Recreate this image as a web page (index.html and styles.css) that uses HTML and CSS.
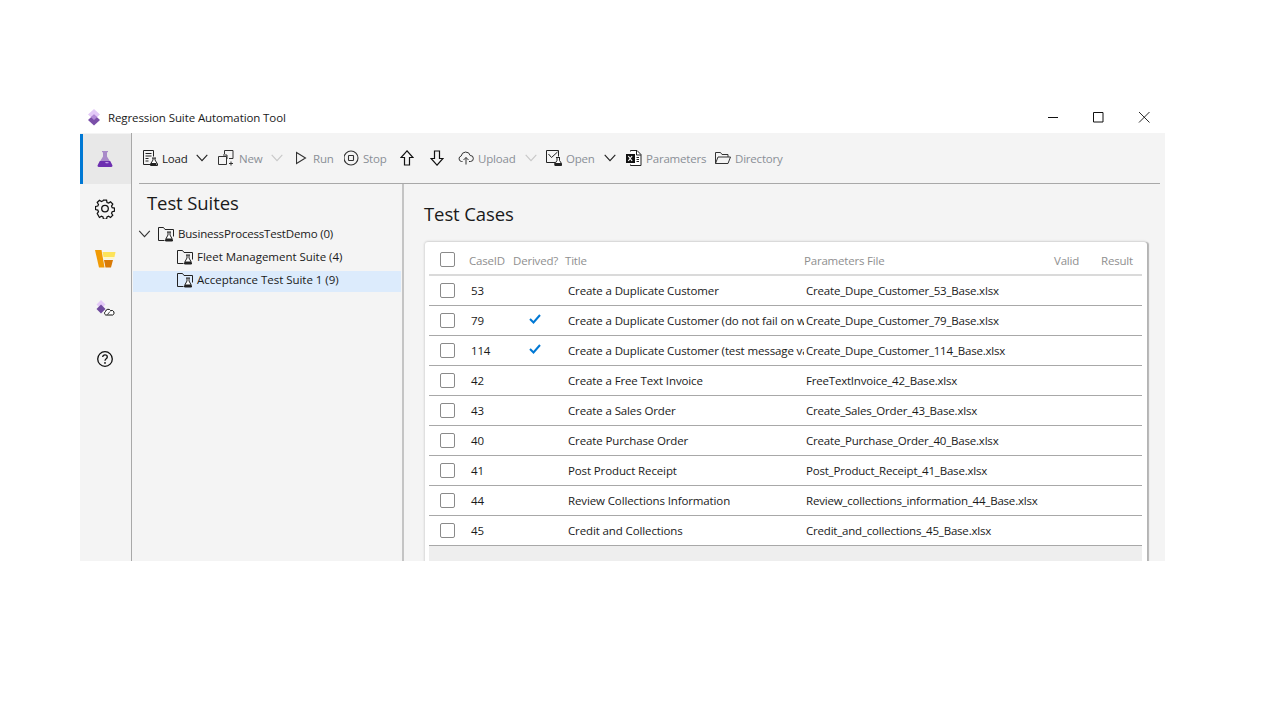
FILE: index.html
```html
<!DOCTYPE html>
<html lang="en">
<head>
<meta charset="utf-8">
<title>Regression Suite Automation Tool</title>
<link rel="stylesheet" href="styles.css">
</head>
<body>
<svg class="defs" width="0" height="0" aria-hidden="true">
  <defs>
    <symbol id="suite" viewBox="0 0 16 16">
      <path d="M.5 14.500V1.500h5l1.500 2h8.500v7" fill="none" stroke="#222"/>
      <path d="M.5 14.500h6" fill="none" stroke="#222"/>
      <path d="M9 6h4M10 6v3l-2.500 4.500v1.500h7v-1.500L12 9V6" fill="#fff" stroke="#222"/>
      <path d="M8 12.500h6V15H8z" fill="#222"/>
    </symbol>
    <symbol id="chev" viewBox="0 0 12 8">
      <path d="M.7.8 6 6.600 11.300.8" fill="none" stroke="currentColor" stroke-width="1.100"/>
    </symbol>
  </defs>
</svg>
<div class="window">
  <header class="titlebar">
    <svg class="app-logo" width="14" height="17" viewBox="0 0 14 17"><path d="M7 0l6 5.500-6 5.500-6-5.500z" fill="#e3c9f7"/><path d="M7 5.500l6 5.500-6 5.500-6-5.500z" fill="#7a4fa8"/><path d="M7 5.500l3 2.750L7 11 4 8.250z" fill="#b48ad8"/></svg>
    <span class="app-title">Regression Suite Automation Tool</span>
    <div class="win-controls">
      <svg class="wc" width="46" height="12" viewBox="0 0 46 12"><path d="M19 6.500h10" stroke="#111"/></svg>
      <svg class="wc" width="46" height="12" viewBox="0 0 46 12"><path d="M18.500 1.500h9.500v9.500h-9.500z" fill="none" stroke="#111"/></svg>
      <svg class="wc" width="46" height="12" viewBox="0 0 46 12"><path d="M18 1l10.500 10.500M28.500 1L18 11.500" fill="none" stroke="#111" stroke-width=".9"/></svg>
    </div>
  </header>
  <div class="body">
    <nav class="rail">
      <div class="rail-item active">
        <svg width="18" height="18" viewBox="0 0 18 18"><path d="M6 1h6v1.200h-1v4.300l5.200 8.500c.5 1-.2 2-1.200 2H3c-1 0-1.700-1-1.200-2L7 6.500V2.200H6z" fill="#a98bc9"/><path d="M3.800 11h10.400l2 4c.5 1-.2 2-1.200 2H3c-1 0-1.700-1-1.200-2z" fill="#6d2fb0"/><path d="M9 12.500c1.500-.8 3-.6 4 .2-1 .8-3 1-4-.2z" fill="#c8a4ea"/></svg>
      </div>
      <div class="rail-item">
        <svg width="20" height="20" viewBox="0 0 20 20"><path d="M8.400 1h3.200l.5 2.400 1.600.7 2.100-1.300 2.300 2.300-1.300 2.100.7 1.600 2.400.5v3.200l-2.400.5-.7 1.600 1.300 2.100-2.300 2.300-2.100-1.300-1.600.7-.5 2.400H8.400l-.5-2.400-1.600-.7-2.100 1.300L1.900 15l1.300-2.100-.7-1.600L.1 10.800V7.600l2.400-.5.700-1.600-1.300-2.100L4.200 1.100l2.100 1.300 1.600-.7z" transform="translate(.4 .2) scale(.96)" fill="none" stroke="#111" stroke-width="1.300"/><circle cx="10" cy="9.600" r="3.300" fill="none" stroke="#111" stroke-width="1.300"/></svg>
      </div>
      <div class="rail-item">
        <svg width="21" height="18" viewBox="0 0 21 18"><path d="M0 0h6.500L9.500 17.500H4z" fill="#f09a05"/><path d="M7.500 2h13l-1 5h-11z" fill="#fde35a"/><path d="M8.500 7h11l-.5 2H9z" fill="#fff6c8"/><path d="M9 10h9l-2 7.500H10.500z" fill="#d97a06"/></svg>
      </div>
      <div class="rail-item">
        <svg width="20" height="18" viewBox="0 0 20 18"><path d="M6 0l4.500 4.500L6 9 1.500 4.500z" fill="#e3c9f7"/><path d="M6 4.500l4.500 4.500L6 13.500 1.500 9z" fill="#6f4a9e"/><path d="M10.500 11.500a2.800 2.800 0 0 1 5.200-.8 2.300 2.300 0 0 1 2 4.300h-7a2 2 0 0 1-.2-3.500z" fill="#fff" stroke="#111"/><path d="M12.500 14.500l2.500-3" stroke="#111" stroke-width=".8"/></svg>
      </div>
      <div class="rail-item">
        <svg width="18" height="18" viewBox="0 0 18 18"><circle cx="9" cy="9" r="7.300" fill="none" stroke="#111" stroke-width="1.300"/><path d="M6.700 7.100c0-1.300 1-2.200 2.300-2.200s2.300.9 2.300 2.100c0 1.800-2.300 1.800-2.300 3.800" fill="none" stroke="#111" stroke-width="1.300"/><circle cx="9" cy="12.900" r=".9" fill="#111"/></svg>
      </div>
    </nav>
    <div class="main">
      <div class="toolbar">
        <div class="tool tool-load">
          <svg width="16" height="16" viewBox="0 0 16 16"><path d="M9.500 14.500h-8V.5h10v6" fill="none" stroke="#222"/><path d="M3.500 3.500h6M3.500 6h6M3.500 8.500h3M3.500 11h3" stroke="#222"/><path d="M10 8h4M11 8v2l-2.500 4v1.500h7V14L13 10V8" fill="#fff" stroke="#222"/><path d="M9 13h5.500v2.500H9z" fill="#222"/></svg>
          <span class="label on">Load</span>
          <svg class="chev on-c" width="12" height="8"><use href="#chev"/></svg>
        </div>
        <div class="tool tool-new">
          <svg width="16" height="16" viewBox="0 0 16 16"><path d="M.5 6.500h8v8h-8zM6.500 4V.5h8.500v8H11" fill="none" stroke="#333"/><path d="M9 9V5H5" fill="none" stroke="#333"/><path d="M13 11.500v4M11 13.500h4" stroke="#333"/></svg>
          <span class="label off">New</span>
          <svg class="chev off-c" width="12" height="8"><use href="#chev"/></svg>
        </div>
        <div class="tool tool-run">
          <svg width="12" height="14" viewBox="0 0 12 14"><path d="M.5 1.500v11L9.500 7z" fill="none" stroke="#333" stroke-width="1.100"/></svg>
          <span class="label off">Run</span>
        </div>
        <div class="tool tool-stop">
          <svg width="16" height="16" viewBox="0 0 16 16"><circle cx="7" cy="8" r="7" fill="none" stroke="#333" stroke-width="1.100"/><rect x="4.500" y="5.500" width="5" height="5" rx=".6" fill="none" stroke="#333" stroke-width="1.100"/></svg>
          <span class="label off">Stop</span>
        </div>
        <div class="tool tool-up">
          <svg width="14" height="16" viewBox="0 0 14 16"><path d="M7 .8 1 7.500h3.500v7.500h5V7.500H13z" fill="none" stroke="#111" stroke-width="1.200"/></svg>
        </div>
        <div class="tool tool-down">
          <svg width="14" height="16" viewBox="0 0 14 16"><path d="M7 15.200 1 8.500h3.500V1h5v7.500H13z" fill="none" stroke="#111" stroke-width="1.200"/></svg>
        </div>
        <div class="tool tool-upload">
          <svg width="16" height="14" viewBox="0 0 16 14"><path d="M4.500 10.500H3.500a2.800 2.800 0 0 1-.3-5.500 4.600 4.600 0 0 1 9-.5 3 3 0 0 1 .3 6h-1.500" fill="none" stroke="#333"/><path d="M8 13.500V6.500M5.500 9 8 6.500 10.500 9" fill="none" stroke="#333"/></svg>
          <span class="label off">Upload</span>
          <svg class="chev off-c" width="12" height="8"><use href="#chev"/></svg>
        </div>
        <div class="tool tool-open">
          <svg width="16" height="16" viewBox="0 0 16 16"><path d="M9 12.500H.5V.5h12v6" fill="none" stroke="#222"/><path d="M2.500 4 5.500 7.500 11.500 2" fill="none" stroke="#222"/><path d="M10 7.500h4M11 7.500v3l-2 3v2h6.500v-2l-2-3v-3" fill="#fff" stroke="#222"/><path d="M8.500 13h7v2.500h-7z" fill="#222"/></svg>
          <span class="label off">Open</span>
          <svg class="chev on-c" width="12" height="8"><use href="#chev"/></svg>
        </div>
        <div class="tool tool-params">
          <svg width="16" height="16" viewBox="0 0 16 16"><path d="M4.500 1.500V.5H11l4 4v11H4.500v-1" fill="#fff" stroke="#222"/><path d="M10.500.5v4.500h4.500" fill="none" stroke="#222"/><path d="M0 4h9v9H0z" fill="#111"/><path d="M2.300 6l3.800 5M6.100 6l-3.800 5" stroke="#fff" stroke-width="1.200"/><path d="M10.500 7.500H13M10.500 9.500H13M10.500 11.500H13" stroke="#222"/></svg>
          <span class="label off">Parameters</span>
        </div>
        <div class="tool tool-dir">
          <svg width="16" height="14" viewBox="0 0 16 14"><path d="M.5 12.500V1.500h5l1.500 2h6v2.500" fill="none" stroke="#333"/><path d="M.5 12.500 3 6h12.500l-2.500 6.500z" fill="none" stroke="#333"/></svg>
          <span class="label off">Directory</span>
        </div>
      </div>
      <div class="rule"></div>
      <div class="panes">
        <aside class="tree-pane">
          <h2 class="tree-title">Test Suites</h2>
          <div class="tree-row root">
            <svg class="chev tree-chev" width="12" height="8"><use href="#chev"/></svg>
            <svg width="16" height="16"><use href="#suite"/></svg>
            <span>BusinessProcessTestDemo (0)</span>
          </div>
          <div class="tree-row child">
            <svg width="16" height="16"><use href="#suite"/></svg>
            <span>Fleet Management Suite (4)</span>
          </div>
          <div class="tree-row child selected">
            <svg width="16" height="16"><use href="#suite"/></svg>
            <span>Acceptance Test Suite 1 (9)</span>
          </div>
        </aside>
        <section class="cases-pane">
          <h2 class="cases-title">Test Cases</h2>
          <div class="card">
            <div class="grid-row head">
              <span class="box"></span><span>CaseID</span><span>Derived?</span><span>Title</span><span>Parameters File</span><span>Valid</span><span>Result</span>
            </div>
            <div class="grid-row"><span class="box"></span><span class="id">53</span><span></span><span class="cell title">Create a Duplicate Customer</span><span class="cell">Create_Dupe_Customer_53_Base.xlsx</span></div>
            <div class="grid-row"><span class="box"></span><span class="id">79</span><span class="tick"><svg width="12" height="10" viewBox="0 0 12 10"><path d="M1 5l3.500 3.500L11 1" fill="none" stroke="#0078d4" stroke-width="2"/></svg></span><span class="cell title">Create a Duplicate Customer (do not fail on warning messages)</span><span class="cell">Create_Dupe_Customer_79_Base.xlsx</span></div>
            <div class="grid-row"><span class="box"></span><span class="id">114</span><span class="tick"><svg width="12" height="10" viewBox="0 0 12 10"><path d="M1 5l3.500 3.500L11 1" fill="none" stroke="#0078d4" stroke-width="2"/></svg></span><span class="cell title">Create a Duplicate Customer (test message validation)</span><span class="cell">Create_Dupe_Customer_114_Base.xlsx</span></div>
            <div class="grid-row"><span class="box"></span><span class="id">42</span><span></span><span class="cell title">Create a Free Text Invoice</span><span class="cell">FreeTextInvoice_42_Base.xlsx</span></div>
            <div class="grid-row"><span class="box"></span><span class="id">43</span><span></span><span class="cell title">Create a Sales Order</span><span class="cell">Create_Sales_Order_43_Base.xlsx</span></div>
            <div class="grid-row"><span class="box"></span><span class="id">40</span><span></span><span class="cell title">Create Purchase Order</span><span class="cell">Create_Purchase_Order_40_Base.xlsx</span></div>
            <div class="grid-row"><span class="box"></span><span class="id">41</span><span></span><span class="cell title">Post Product Receipt</span><span class="cell">Post_Product_Receipt_41_Base.xlsx</span></div>
            <div class="grid-row"><span class="box"></span><span class="id">44</span><span></span><span class="cell title">Review Collections Information</span><span class="cell">Review_collections_information_44_Base.xlsx</span></div>
            <div class="grid-row"><span class="box"></span><span class="id">45</span><span></span><span class="cell title">Credit and Collections</span><span class="cell">Credit_and_collections_45_Base.xlsx</span></div>
            <div class="empty"></div>
          </div>
        </section>
      </div>
    </div>
  </div>
</div>
</body>
</html>
```
FILE: styles.css
```css
* { box-sizing: border-box; }
html, body { margin: 0; background: #fff; }
body {
  height: 720px;
  overflow: hidden;
  padding: 105px 0 0 80px;
  font-family: "Open Sans", "Noto Sans", sans-serif;
  font-size: 11.5px;
  letter-spacing: -.2px;
  color: #1a1a1a;
}
.defs { position: absolute; }
svg { display: block; flex: none; }

.window { width: 1085px; height: 456px; display: flex; flex-direction: column; overflow: hidden; }

.titlebar { height: 28px; flex: none; display: flex; align-items: center; padding: 0 0 4px 7px; }
.app-logo { margin-right: 7px; margin-top: 1px; }
.app-title { letter-spacing: -.1px; }
.win-controls { margin-left: auto; display: flex; margin-right: -2px; }

.body { flex: 1; display: flex; background: #f4f4f4; min-height: 0; }

.rail { width: 52px; flex: none; border-right: 1px solid #a8a8a8; padding-top: 1px; }
.rail-item { height: 50px; display: flex; align-items: center; justify-content: center; padding-right: 1px; }
.rail-item.active { background: #e8e8e8; box-shadow: inset 3px 0 0 #0078d4; }

.main { flex: 1; min-width: 0; display: flex; flex-direction: column; }

.toolbar { height: 50px; flex: none; display: flex; align-items: center; padding-left: 10px; }
.tool { display: flex; align-items: center; }
.label.on { color: #1a1a1a; }
.label.off { color: #8a8f96; }
.on-c { color: #222; }
.off-c { color: #c8c8c8; }
.tool .chev { margin-left: auto; }

.tool-load { width: 76px; gap: 4px; padding-right: 10px; }
.tool-new { width: 78px; gap: 5px; padding-right: 13px; }
.tool-run { width: 48px; gap: 5px; }
.tool-stop { width: 56px; gap: 3px; }
.tool-up { width: 30px; }
.tool-down { width: 28px; }
.tool-upload { width: 88px; gap: 4px; padding-right: 9px; }
.tool-open { width: 80px; gap: 4px; padding-right: 10px; }
.tool-params { width: 89px; gap: 4px; }
.tool-dir { gap: 4px; }

.rule { height: 1px; flex: none; margin: 0 5px 0 7px; background: #a8a8a8; }

.panes { flex: 1; min-height: 0; display: flex; }

.tree-pane { width: 272px; flex: none; border-right: 2px solid #c4c4c4; padding: 7px 1px 0 1px; }
.tree-title { margin: 0 0 10px 14px; font-size: 18.5px; font-weight: 400; line-height: 24px; letter-spacing: -.1px; }
.tree-row { height: 21px; margin-bottom: 2px; padding-bottom: 4px; display: flex; align-items: center; gap: 4px; letter-spacing: -.03px; }
.tree-row.root { padding-left: 5px; letter-spacing: -.18px; }
.tree-chev { color: #333; margin-right: 3px; width: 13px; }
.tree-row.child { padding-left: 44px; }
.tree-row.selected { background: #dcebfc; }

.cases-pane { flex: 1; min-width: 0; display: flex; flex-direction: column; padding: 17px 0 0 20px; }
.cases-title { margin: 0 0 16px; font-size: 18.5px; font-weight: 400; line-height: 25px; letter-spacing: -.1px; }

.card {
  width: 722px;
  margin-left: 1px;
  flex: 1;
  background: #fff;
  border-radius: 3px 3px 0 0;
  box-shadow: 2px 0 1px #b4b4b4, 0 -1px 2px #d8d8d8, -1px 0 2px #dddddd;
  padding: 3px 5px 0 4px;
}
.grid-row {
  display: grid;
  grid-template-columns: 40px 44px 52px 239px 250px 47px 1fr;
  height: 30px;
  align-items: center;
  border-bottom: 1px solid #a8a8a8;
}
.grid-row.head { height: 31px; border-bottom: 2px solid #dadada; color: #8f8f8f; }
.head span:not(.box) { padding-top: 2px; }
.box { width: 15px; height: 15px; margin-left: 11px; background: #fff; border: 1px solid #8a8a8a; border-radius: 2px; }
.id { padding-left: 2px; }
.tick { display: flex; justify-content: center; padding: 0 8px 4px 0; }
.cell { padding-left: 3px; white-space: nowrap; overflow: hidden; padding-right: 1px; }
.cell.title { letter-spacing: -.12px; }
.grid-row .cell:last-child { grid-column: 5 / 8; padding-left: 2px; }
.empty { height: 30px; background: #eeeeee; }
```
